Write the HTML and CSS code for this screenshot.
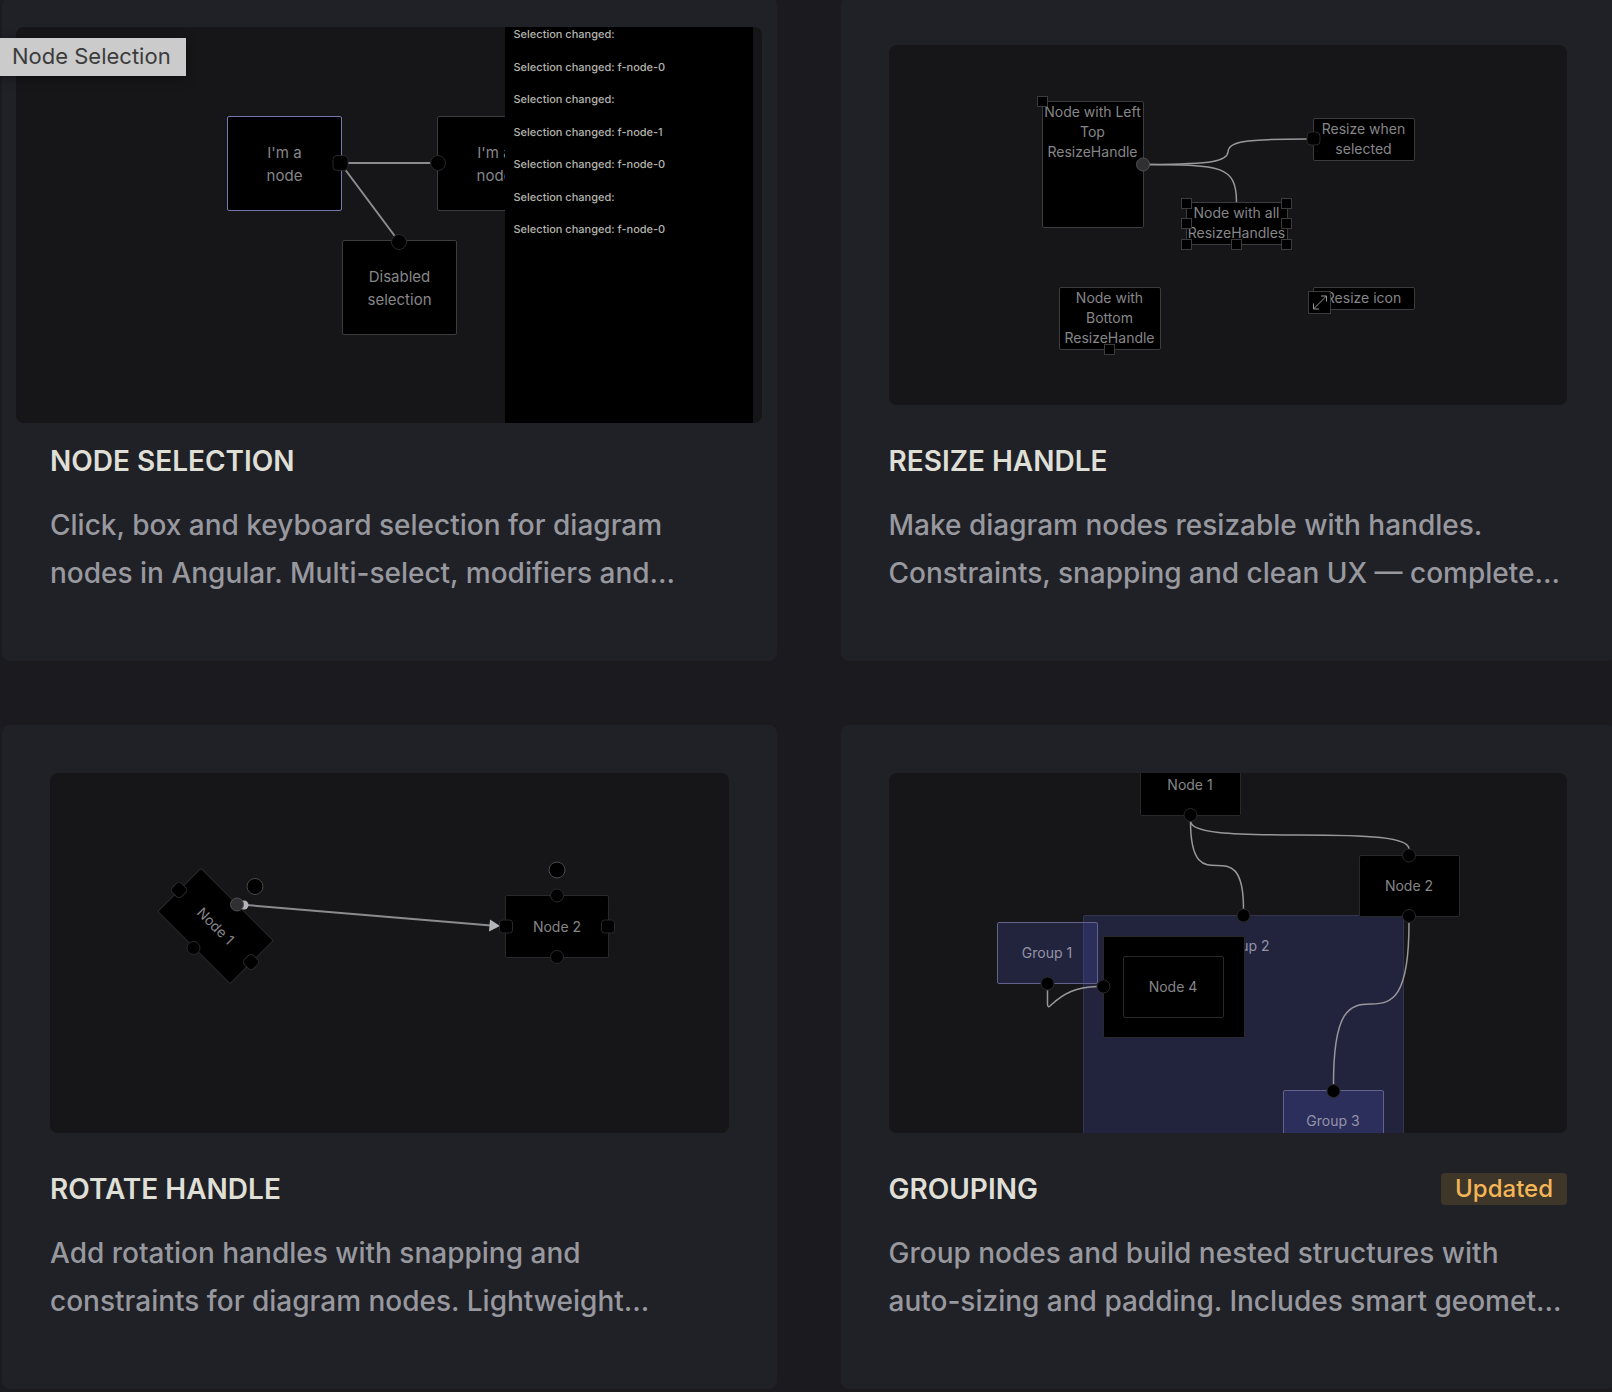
FILE: index.html
```html
<!DOCTYPE html>
<html lang="en">
<head>
<meta charset="utf-8">
<title>Examples</title>
<link rel="stylesheet" href="styles.css">
</head>
<body>
<main class="examples">
  <a class="card active" href="#node-selection">
    <div class="preview">
      <div class="node large selected" style="left:211px;top:89px">I'm a<br>node</div>
      <div class="node large" style="left:421px;top:89px">I'm a<br>node</div>
      <div class="node large" style="left:326px;top:213px">Disabled<br>selection</div>
      <svg class="edges" aria-hidden="true">
        <path class="edge thick" d="M330 136H416M328 141L381 212"/>
        <rect class="port" x="317" y="128.500" width="15" height="15" rx="4"/>
        <circle class="port" cx="422" cy="136" r="7.500"/>
        <circle class="port" cx="383" cy="215" r="7.500"/>
      </svg>
      <div class="log">
        <span>Selection changed:</span>
        <span>Selection changed: f-node-0</span>
        <span>Selection changed:</span>
        <span>Selection changed: f-node-1</span>
        <span>Selection changed: f-node-0</span>
        <span>Selection changed:</span>
        <span>Selection changed: f-node-0</span>
      </div>
    </div>
    <div class="heading"><h2>NODE SELECTION</h2></div>
    <p>Click, box and keyboard selection for diagram nodes in Angular. Multi-select, modifiers and…</p>
  </a>

  <a class="card" href="#resize-handle">
    <div class="preview">
      <div class="node top" style="left:153px;top:56px;width:102px;height:127px">Node with Left<br>Top<br>ResizeHandle</div>
      <div class="node top" style="left:424px;top:73px;width:102px;height:43px">Resize when<br>selected</div>
      <div class="node top" style="left:297px;top:157px;width:102px;height:43px">Node with all<br>ResizeHandles</div>
      <div class="node top" style="left:170px;top:242px;width:102px;height:63px">Node with<br>Bottom<br>ResizeHandle</div>
      <div class="node top" style="left:424px;top:242px;width:102px;height:23px">Resize icon</div>
      <svg class="edges" aria-hidden="true">
        <path class="edge" d="M260 119.500C326 119 338 116 339 107C340 97 352 94 418 94"/>
        <path class="edge" d="M260 119.500C330 120 347.500 120 347.500 157"/>
        <circle class="port used" cx="254" cy="119.500" r="6.500"/>
        <rect class="port" x="418" y="87" width="13" height="13" rx="4"/>
        <g class="handle">
          <rect x="148.500" y="51.500" width="10" height="10"/>
          <rect x="292.500" y="153.500" width="10" height="10"/>
          <rect x="392.500" y="153.500" width="10" height="10"/>
          <rect x="292.500" y="173.500" width="10" height="10"/>
          <rect x="392.500" y="173.500" width="10" height="10"/>
          <rect x="292.500" y="194.500" width="10" height="10"/>
          <rect x="342.500" y="194.500" width="10" height="10"/>
          <rect x="392.500" y="194.500" width="10" height="10"/>
          <rect x="215.500" y="299.500" width="10" height="10"/>
          <rect x="419.500" y="246.500" width="22" height="22"/>
        </g>
        <path class="arrows" d="M424.500 264L437.500 251M432 251H437.500V256.500M424.500 258.500V264H430"/>
      </svg>
    </div>
    <div class="heading"><h2>RESIZE HANDLE</h2></div>
    <p>Make diagram nodes resizable with handles. Constraints, snapping and clean UX — complete…</p>
  </a>

  <a class="card" href="#rotate-handle">
    <div class="preview">
      <div class="node dim turned" style="left:114px;top:122px;width:103px;height:62px">Node 1</div>
      <div class="node dim" style="left:455px;top:122px;width:104px;height:63px">Node 2</div>
      <svg class="edges" aria-hidden="true">
        <path class="edge thick" d="M196 132L441 152.500"/>
        <circle class="marker" cx="194" cy="132" r="4.500"/>
        <path class="marker" d="M440 146.500L450 153L439 158.500Z"/>
        <circle class="port used" cx="187" cy="131.500" r="6.500"/>
        <circle class="port" cx="143.500" cy="175" r="6.500"/>
        <rect class="port" x="122.500" y="110.500" width="13" height="13" rx="4" transform="rotate(45 129 117)"/>
        <rect class="port" x="194.500" y="182.500" width="13" height="13" rx="4" transform="rotate(45 201 189)"/>
        <circle class="port rotate" cx="205" cy="113.500" r="8"/>
        <circle class="port rotate" cx="507" cy="97" r="8"/>
        <circle class="port" cx="507" cy="122.500" r="6.500"/>
        <circle class="port" cx="507" cy="184" r="6.500"/>
        <rect class="port" x="449.500" y="147" width="13" height="13" rx="3"/>
        <rect class="port" x="551.500" y="147" width="13" height="13" rx="3"/>
      </svg>
    </div>
    <div class="heading"><h2>ROTATE HANDLE</h2></div>
    <p>Add rotation handles with snapping and constraints for diagram nodes. Lightweight…</p>
  </a>

  <a class="card" href="#grouping">
    <div class="preview">
      <div class="node group quiet" style="left:194px;top:142px;width:321px;height:321px"><span class="label">Group 2</span></div>
      <div class="node group" style="left:108px;top:149px;width:101px;height:62px">Group 1</div>
      <div class="node group" style="left:394px;top:317px;width:101px;height:62px">Group 3</div>
      <div class="node dim" style="left:251px;top:-19px;width:101px;height:62px">Node 1</div>
      <div class="node dim" style="left:470px;top:82px;width:101px;height:62px">Node 2</div>
      <div class="node dim" style="left:214px;top:163px;width:142px;height:102px"></div>
      <div class="node dim" style="left:234px;top:183px;width:101px;height:62px">Node 4</div>
      <svg class="edges" aria-hidden="true">
        <path class="edge" d="M301.500 48C301.500 60 340 62 410 62S520 64 520 76"/>
        <path class="edge" d="M301.500 48C301.500 92 315 92.500 328 92.500S354.500 93 354.500 136"/>
        <path class="edge" d="M520 150C520 225 503 231 482 231S444.500 236 444.500 311"/>
        <path class="edge" d="M158.500 217V231Q158.500 236 162 232C175 220 187 214 208 213.500"/>
        <circle class="port" cx="301.500" cy="42" r="6.500"/>
        <circle class="port" cx="520" cy="82.500" r="6.500"/>
        <circle class="port" cx="520" cy="143" r="6.500"/>
        <circle class="port" cx="354.500" cy="142.500" r="6.500"/>
        <circle class="port" cx="444.500" cy="318" r="6.500"/>
        <circle class="port" cx="158.500" cy="210.500" r="6.500"/>
        <circle class="port" cx="214.500" cy="213.500" r="6.500"/>
      </svg>
    </div>
    <div class="heading"><h2>GROUPING</h2><span class="badge">Updated</span></div>
    <p>Group nodes and build nested structures with auto-sizing and padding. Includes smart geomet…</p>
  </a>
</main>
<div class="tooltip" role="tooltip">Node Selection</div>
</body>
</html>
```
FILE: styles.css
```css
* { box-sizing: border-box; }
html { background: #1b1b1f; }
body {
  margin: 0;
  overflow-x: hidden;
  background: #1b1b1f;
  font-family: Inter, "Liberation Sans", sans-serif;
}
.examples {
  display: grid;
  grid-template-columns: 1fr 1fr;
  gap: 64px;
  margin: -3px -3px 0 2px;
}
.card {
  display: block;
  padding: 48px 48px 64px;
  border-radius: 8px;
  background: #202127;
  color: inherit;
  text-decoration: none;
}
.preview {
  position: relative;
  height: 360px;
  border-radius: 8px;
  overflow: hidden;
  background: #161618;
}
/* the hovered card shows its preview enlarged */
.active .preview {
  height: 396px;
  margin: -18px -33px -18px -34px;
}
.heading {
  display: flex;
  align-items: center;
  justify-content: space-between;
  margin-top: 40px;
}
h2 {
  margin: 0;
  font-size: 28px;
  font-weight: 600;
  line-height: 32px;
  color: #dfdfd6;
}
p {
  margin: 24px 0 0;
  font-size: 28px;
  font-weight: 500;
  line-height: 48px;
  color: #98989f;
}
.badge {
  padding: 0 14px;
  border-radius: 4px;
  background: #3e3629;
  color: #f3b557;
  font-size: 24px;
  font-weight: 500;
  line-height: 32px;
}

/* diagrams */
.node {
  position: absolute;
  display: flex;
  align-items: center;
  justify-content: center;
  border: 1px solid #3c3c3f;
  border-radius: 2px;
  background: #000;
  color: #868689;
  font-size: 14px;
  line-height: 20px;
  text-align: center;
  white-space: nowrap;
}
.node.large {
  width: 115px;
  height: 95px;
  font-size: 15px;
  line-height: 23px;
}
.node.selected { border-color: #7478ae; }
.node.top { align-items: flex-start; }
.node.dim { border-color: #29292b; }
.node.turned { transform: rotate(45deg); }
.node.group {
  border-color: #62628a;
  background: rgba(100, 108, 255, 0.16);
  color: #9494a6;
}
.node.quiet {
  align-items: flex-start;
  border-color: #34344d;
}
.label { padding-top: 20px; }
.edges {
  position: absolute;
  inset: 0;
  width: 100%;
  height: 100%;
}
.edge {
  fill: none;
  stroke: #98989c;
  stroke-width: 1.5;
}
.edge.thick { stroke: #8c8c8e; stroke-width: 2; }
.marker { fill: #b4b4bc; }
.port { fill: #000; stroke: #29292c; }
.port.used { fill: #303032; stroke: #505053; }
.port.rotate { stroke: #4a4a4c; }
.handle { fill: #000; stroke: #3c3c3f; }
.arrows { fill: none; stroke: #98989c; }
.log {
  position: absolute;
  top: 0;
  right: 9px;
  bottom: 0;
  display: flex;
  flex-direction: column;
  justify-content: space-between;
  width: 248px;
  padding: 0 0 187px 9px;
  background: #000;
  color: #b4b4ae;
  font-size: 11px;
  font-weight: 500;
  line-height: 14px;
  text-rendering: geometricPrecision;
}
.tooltip {
  position: absolute;
  top: 38px;
  left: 0;
  padding: 0 15px 2px 12px;
  background: #cbcbcb;
  box-shadow: 0 2px 10px rgba(0, 0, 0, 0.4);
  color: #3c3c3c;
  font-size: 22px;
  line-height: 36px;
}
```
